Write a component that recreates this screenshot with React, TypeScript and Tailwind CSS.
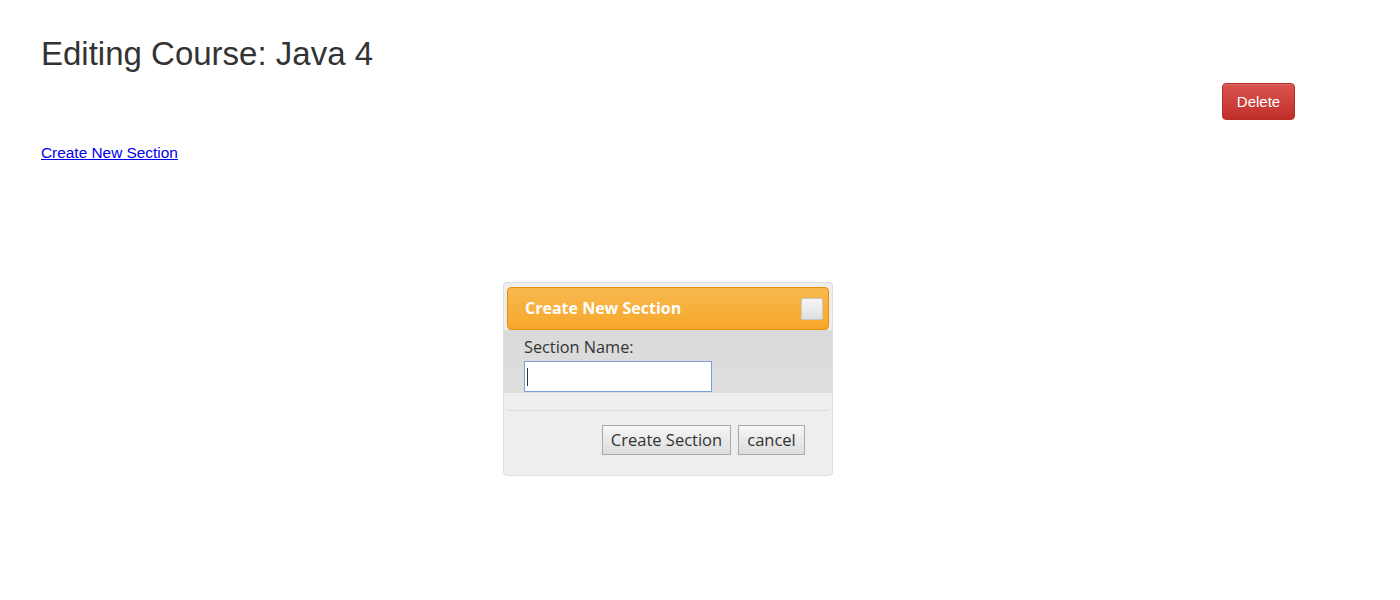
export default function App() {
  return (
    <div className="min-h-[600px] bg-white font-['Liberation_Sans',Arial,sans-serif] text-[#333]">
      <div className="pl-[41px] pr-[105px] pt-[34px]">
        <h1 className="text-[33px] leading-[40px] font-normal">Editing Course: Java 4</h1>
        <div className="flex justify-end mt-[9px]">
          <button
            type="button"
            className="w-[73px] h-[37px] rounded-[4px] border border-[#b92c28] bg-gradient-to-b from-[#d9534f] to-[#c12e2a] text-white text-[15px] leading-none shadow-[inset_0_1px_0_rgba(255,255,255,0.15)]"
          >
            Delete
          </button>
        </div>
        <a href="#" className="block mt-[24px] text-[15.4px] leading-[18px] text-[#0000ee] underline w-max">
          Create New Section
        </a>
      </div>

      {/* modal dialog */}
      <div className="flex pl-[503px] mt-[120px]">
        <div className="w-[330px] h-[194px] rounded-[4px] border border-[#dddddd] bg-[#eeeeee] flex flex-col font-['Open_Sans','Noto_Sans',sans-serif]">
          <div className="mx-[3px] mt-[4px] h-[43px] rounded-[4px] border border-[#e78f08] bg-gradient-to-b from-[#f8b84e] to-[#f6a828] flex items-center justify-between pl-[17px] pr-[5px]">
            <span className="text-white font-bold text-[16px] leading-none -mt-[2px]">Create New Section</span>
            <span className="w-[22px] h-[22px] rounded-[2px] border border-[#c8c8c8] bg-gradient-to-b from-[#f7f7f7] to-[#dedede]" />
          </div>
          <div className="bg-gradient-to-b from-[#dadada] to-[#dedede] h-[63px] pl-[20px] pt-[7px]">
            <div className="text-[16.3px] leading-[20px] text-[#333]">Section Name:</div>
            <div className="mt-[4px] w-[188px] h-[31px] border border-[#7b9ed9] bg-white flex items-center pl-[2px]">
              <span className="w-px h-[18px] bg-[#333]" />
            </div>
          </div>
          <div className="mt-[17px] mx-[3px] border-t border-[#dcdcdc]" />
          <div className="flex justify-end gap-[7px] pr-[27px] mt-[14px]">
            <button
              type="button"
              className="w-[129px] h-[30px] border border-[#a8a8a8] bg-gradient-to-b from-[#f6f6f6] to-[#dddddd] text-[16.5px] leading-none text-[#333]"
            >
              Create Section
            </button>
            <button
              type="button"
              className="w-[67px] h-[30px] border border-[#a8a8a8] bg-gradient-to-b from-[#f6f6f6] to-[#dddddd] text-[16.5px] leading-none text-[#333]"
            >
              cancel
            </button>
          </div>
        </div>
      </div>
    </div>
  );
}
